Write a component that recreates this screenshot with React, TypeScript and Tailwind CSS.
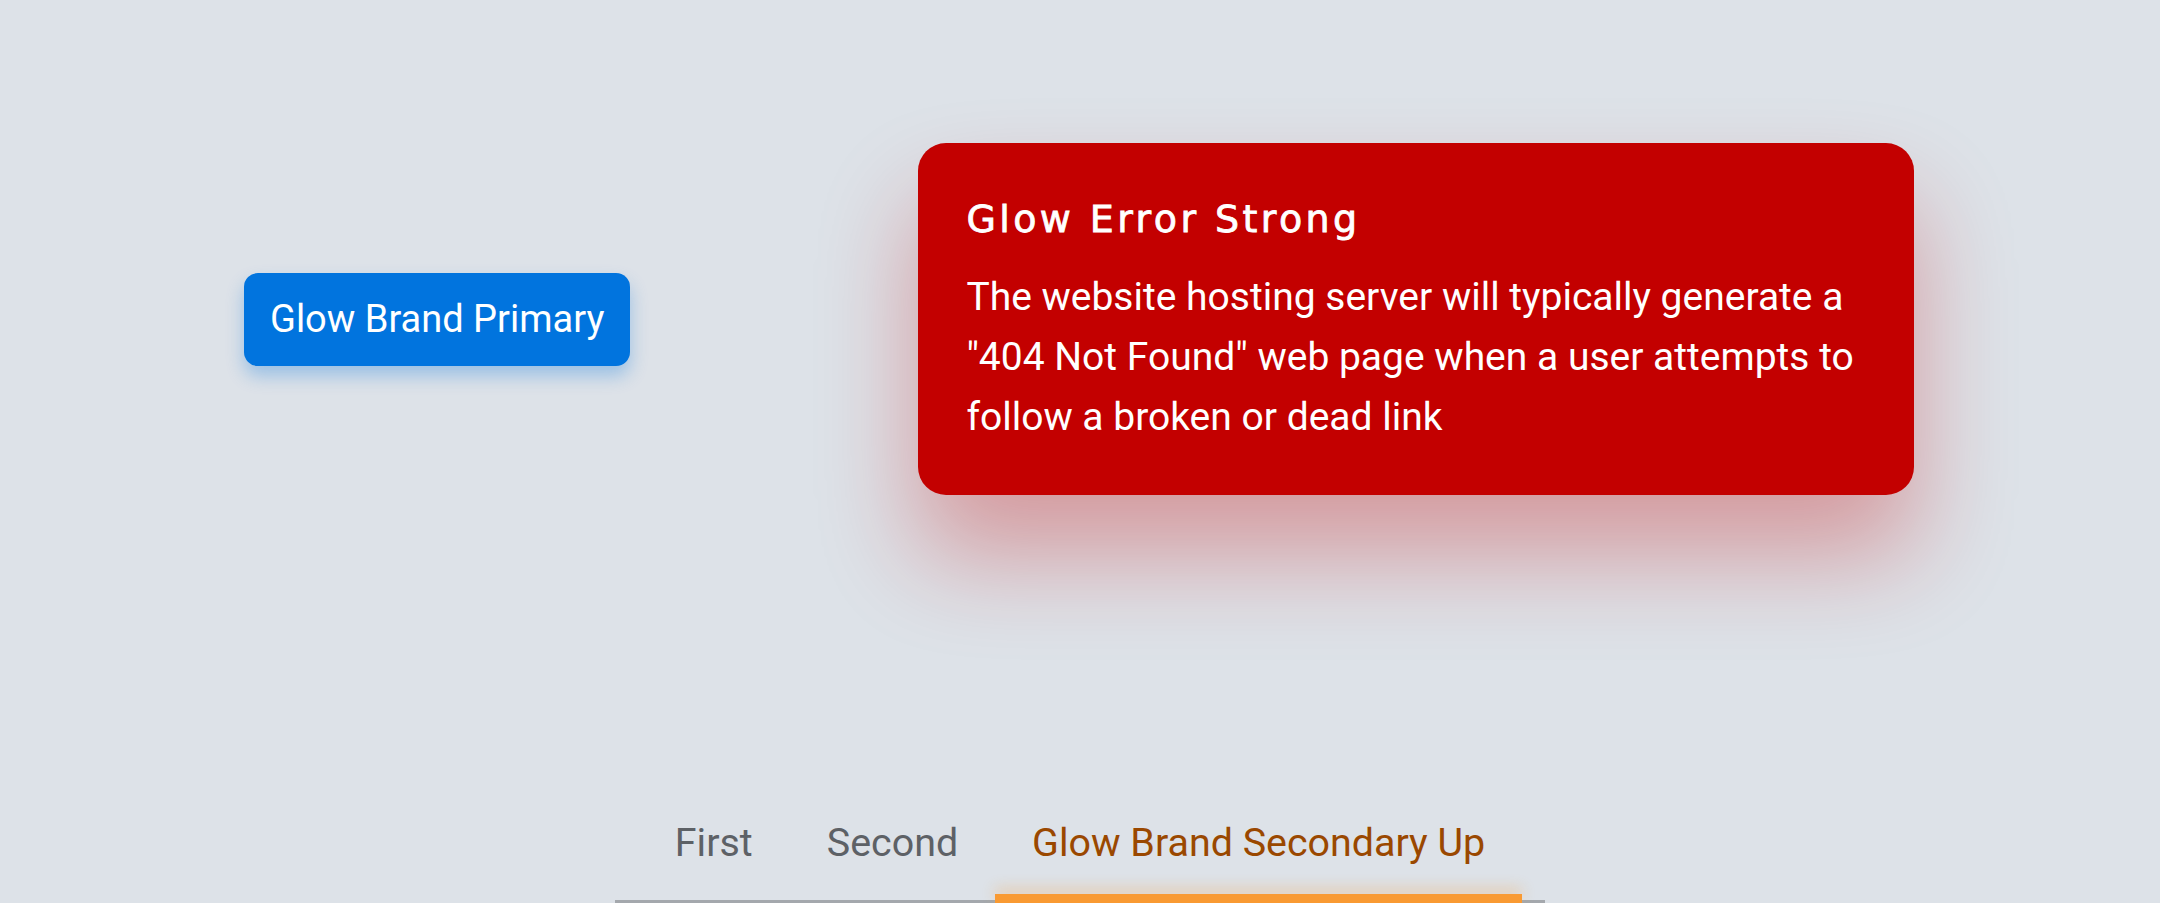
import { useState } from 'react'

const tabs = ['First', 'Second', 'Glow Brand Secondary Up']

export default function App() {
  const [active, setActive] = useState(2)

  return (
    <div className="min-h-screen bg-[#dde2e8] font-['Roboto',sans-serif] overflow-hidden">
      {/* Button + card row */}
      <div className="flex items-center pt-[143px] pl-[244px] gap-[288px]">
        <button className="h-[93px] px-[26px] flex items-center rounded-[14px] bg-[#0174de] text-white text-[38px] leading-none shadow-[0_10px_18px_rgba(1,116,222,0.3)]">
          Glow Brand Primary
        </button>

        <div className="w-[996px] rounded-[28px] bg-[#c30000] p-[48px] text-white shadow-[0_60px_100px_rgba(195,0,0,0.32)]">
          <h2 className="font-['DejaVu_Sans',sans-serif] text-[38px] leading-[56px] tracking-[3.4px] [-webkit-text-stroke:0.8px_white]">
            Glow Error Strong
          </h2>
          <p className="mt-5 text-[39px] leading-[60px]">
            The website hosting server will typically generate a "404 Not Found" web page when a user attempts to follow a
            broken or dead link
          </p>
        </div>
      </div>

      {/* Tabs */}
      <div className="mt-[298px] mx-auto w-[930px] flex justify-center border-b-4 border-[#a4a8ad]">
        {tabs.map((tab, i) => (
          <button
            key={tab}
            onClick={() => setActive(i)}
            className={
              i === active
                ? 'relative px-[37px] pt-[20px] pb-[27px] text-[39.4px] leading-[60px] text-[#9a4800]'
                : 'relative px-[37px] pt-[20px] pb-[27px] text-[39.4px] leading-[60px] text-[#5d6166]'
            }
          >
            {tab}
            {i === active && (
              <span className="absolute left-0 right-0 bottom-[-4px] h-[10px] bg-[#f99a32] shadow-[0_-6px_14px_rgba(249,154,50,0.3)]" />
            )}
          </button>
        ))}
      </div>
    </div>
  )
}
